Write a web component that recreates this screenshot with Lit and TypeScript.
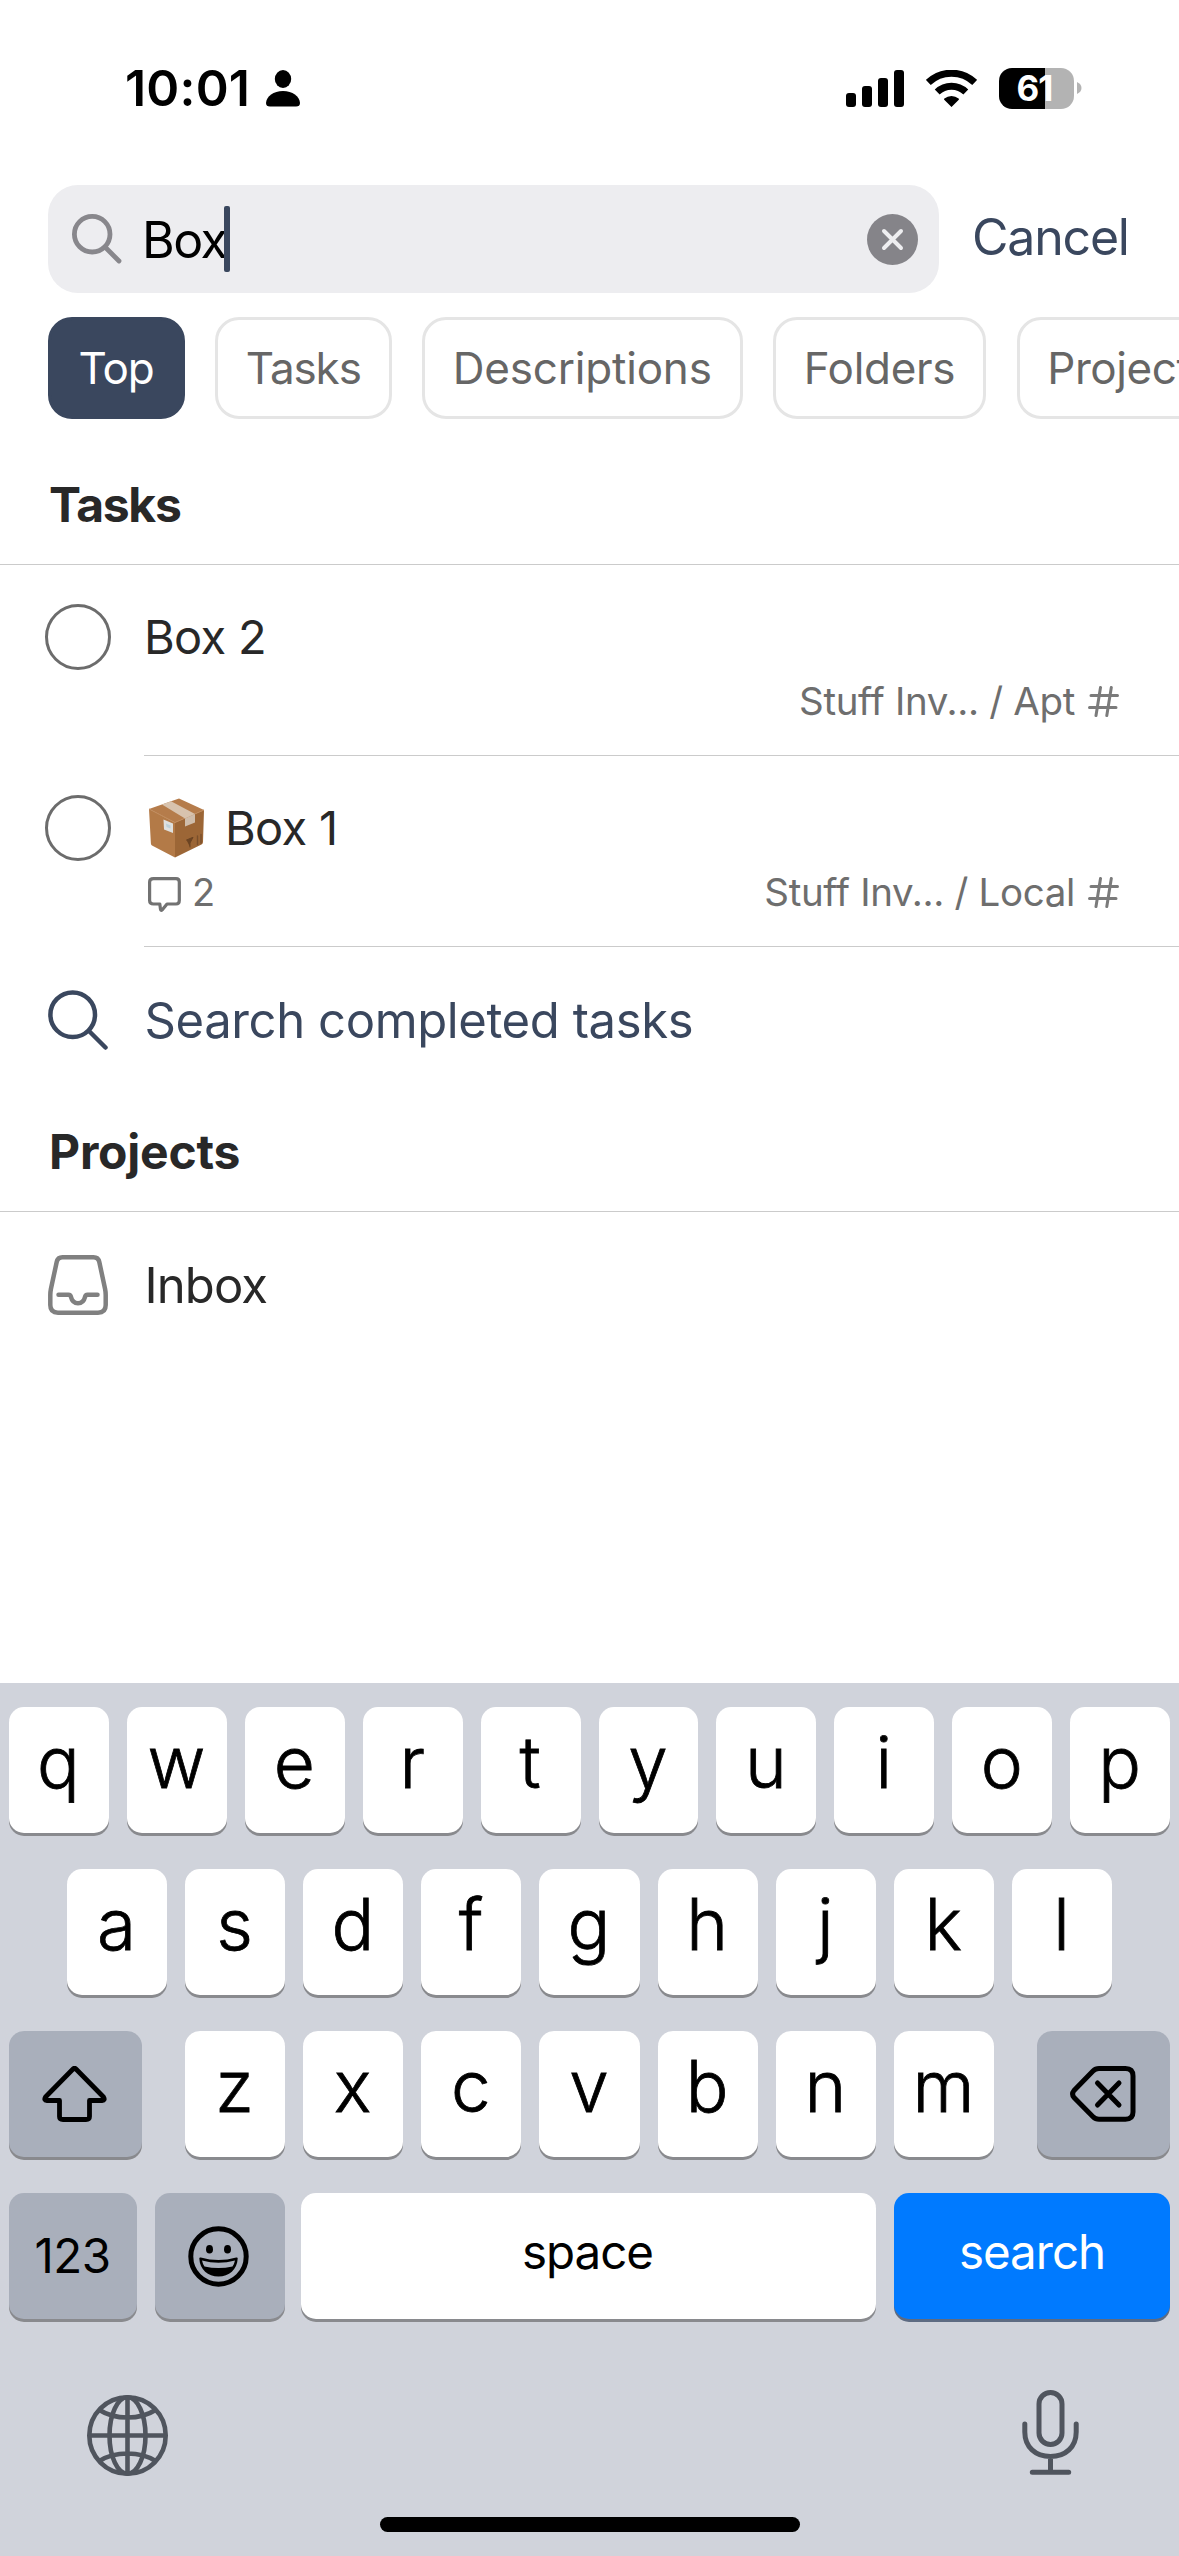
import { LitElement, html, css, svg, nothing } from "lit";
import { customElement, property } from "lit/decorators.js";

interface Task {
  title: string;
  boxed?: boolean;
  comments?: number;
  place: string;
}

interface Filter {
  name: string;
  tracking: number;
}

const filters: Filter[] = [
  { name: "Top", tracking: -1 },
  { name: "Tasks", tracking: -1.1 },
  { name: "Descriptions", tracking: -0.2 },
  { name: "Folders", tracking: -0.3 },
  { name: "Projects", tracking: -0.4 },
];

const tasks: Task[] = [
  { title: "Box 2", place: "Stuff Inv... / Apt" },
  { title: "Box 1", boxed: true, comments: 2, place: "Stuff Inv... / Local" },
];

const icon = (w: number, h: number, body: unknown) =>
  html`<svg width=${w} height=${h} viewBox="0 0 ${w} ${h}" fill="none" stroke-linecap="round" stroke-linejoin="round">${body}</svg>`;

const person = icon(34, 37, svg`
  <ellipse cx="17" cy="9" rx="8.2" ry="9" fill="#000"/>
  <path d="M4 36.500Q0 36.500 0 33C.5 26 7.500 21 17 21S33.500 26 34 33Q34 36.500 30 36.500Z" fill="#000"/>`);

const signal = icon(58, 37, svg`
  <g fill="#000">
    <rect x="0" y="23" width="10" height="14" rx="3"/>
    <rect x="16" y="16" width="10" height="21" rx="3"/>
    <rect x="32" y="8" width="10" height="29" rx="3"/>
    <rect x="48" y="0" width="10" height="37" rx="3"/>
  </g>`);

const wifi = icon(51, 37, svg`
  <g stroke="#000" stroke-width="7" stroke-linecap="butt">
    <path d="M2.300 12.500A33.500 33.500 0 0 1 48.700 12.500"/>
    <path d="M11.200 22A20.500 20.500 0 0 1 39.800 22"/>
  </g>
  <path d="M25.500 37L18.200 29.700Q17.700 29 18.400 28.500A11 11 0 0 1 32.600 28.500Q33.300 29 32.800 29.700Z" fill="#000"/>`);

const batteryCap = icon(5, 12, svg`<path d="M0 0C6 2.500 6 9.500 0 12Z" fill="#b3b3b3"/>`);

const fieldGlass = icon(50, 50, svg`
  <g stroke="#88878c" stroke-width="4.800"><circle cx="20.200" cy="20.200" r="17.800"/><path d="M33.500 33.500L47 47"/></g>`);

const listGlass = icon(60, 60, svg`
  <g stroke="#3a475e" stroke-width="4.500"><circle cx="24.700" cy="24.700" r="22.300"/><path d="M41.500 41.500L57.500 57.500"/></g>`);

const clear = icon(51, 51, svg`
  <circle cx="25.500" cy="25.500" r="25.500" fill="#858489"/>
  <path d="M17 17L34 34M34 17L17 34" stroke="#eeeef0" stroke-width="4"/>`);

const parcel = icon(55, 60, svg`
  <path d="M30 .5L0 11L26 24.500L55 12Z" fill="#b57c4b"/>
  <path d="M0 11L26 24.500V59.500L3 47.500Q2 47 1.900 45.500Z" fill="#b37a47"/>
  <path d="M55 12L26 24.500V59.500L52.500 46.500Q54 45.700 54 44Z" fill="#9c6636"/>
  <path d="M0 11L26 24.500L55 12" stroke="#c08b5c" stroke-width="1"/>
  <path d="M13 6.500L22 3.200L46 16L36 20.500Z" fill="#d8c3ae"/>
  <path d="M36 20.500L46 16V24.500L36 28.500Z" fill="#cfbdab"/>
  <path d="M14.500 21.500L24 25.500V35L15 31.500Z" fill="#dfe0de"/>
  <path d="M17 25.500L21.500 27.500V30.500L17.500 29Z" fill="#bdd0d8"/>
  <path d="M37.500 42L44 39.300L41 45V49" stroke="#6b4423" stroke-width="1" fill="#6b4423"/>
  <path d="M48.500 38V46.500M52 36.500V45" stroke="#7a4f2b" stroke-width="1.400"/>`);

const bubble = icon(33, 35, svg`
  <path d="M5.500 1.600H28Q31.300 1.600 31.300 5V23.500Q31.300 27 28 27H19L14.300 32.800Q12.800 34 12.500 32.200L11.800 27H5.500Q1.600 27 1.600 23.500V5Q1.600 1.600 5.500 1.600Z" stroke="#727272" stroke-width="3.200"/>`);

const hash = icon(31, 31, svg`
  <path d="M12.500 1.500L8 29.500M23.300 1.500L18.800 29.500M3 9.500H29.500M1.500 21.500H28" stroke="#7b7b7b" stroke-width="3"/>`);

const inbox = icon(60, 60, svg`
  <g stroke="#808080" stroke-width="4.500">
    <path d="M14.500 2.300H45.500Q50.300 2.300 51.300 7L57.100 34Q57.700 37 57.700 40V50Q57.700 57.700 50 57.700H10Q2.300 57.700 2.300 50V40Q2.300 37 2.900 34L8.700 7Q9.700 2.300 14.500 2.300Z"/>
    <path d="M10.500 39.800H20.500Q22.500 39.800 23 42C24 46.300 26.500 48.200 30 48.200S36 46.300 37 42Q37.500 39.800 39.500 39.800H49.500"/>
  </g>`);

const shift = icon(65, 56, svg`
  <path d="M30.800 3.200Q32.500 1.500 34.200 3.200L61.500 31Q63.500 34.200 60 34.500H47.500V50.500Q47.500 53.500 44 53.500H21Q17.500 53.500 17.500 50.500V34.500H5Q1.500 34.200 3.500 31Z" stroke="#000" stroke-width="4.800"/>`);

const backspace = icon(66, 56, svg`
  <g stroke="#000" stroke-width="5">
    <path d="M29 2.500H55.500Q63 2.500 63 10V46Q63 53.200 55.500 53.200H29Q25.500 53.200 23 50.700L4 31.500Q1.200 28 4 24.500L23 5Q25.500 2.500 29 2.500Z"/>
    <path d="M27.500 17L49 39M49 17L27.500 39"/>
  </g>`);

const smiley = icon(61, 61, svg`
  <circle cx="30.500" cy="30.500" r="27.700" stroke="#000" stroke-width="5"/>
  <g fill="#000">
    <ellipse cx="21.500" cy="23.200" rx="3.500" ry="4.300"/>
    <ellipse cx="39.500" cy="23.200" rx="3.500" ry="4.300"/>
    <path d="M11.300 32.500Q11.300 31.200 12.800 31.600Q30.500 36.600 48.200 31.600Q49.700 31.200 49.700 32.500C49.200 43.500 41 50.500 30.500 50.500S11.800 43.500 11.300 32.500Z"/>
  </g>
  <path d="M14 34.500Q30.500 39 47 34.500Q46.300 38 44.500 40.500Q30.500 43.500 16.500 40.500Q14.700 38 14 34.500Z" fill="#a9afbb"/>`);

const globe = icon(81, 81, svg`
  <g stroke="#50555e" stroke-width="4.600" stroke-linecap="butt">
    <circle cx="40.500" cy="40.500" r="38.200"/>
    <ellipse cx="40.500" cy="40.500" rx="18" ry="38.200"/>
    <path d="M40.500 2V79M2 40.500H79M12.500 15Q24 22.500 40.500 22.500T68.500 15M12.500 66Q24 58.500 40.500 58.500T68.500 66"/>
  </g>`);

const mic = icon(57, 86, svg`
  <g stroke="#50555e" stroke-width="5">
    <rect x="17" y="2.500" width="23" height="52" rx="11.500"/>
    <path d="M2.800 34V42C2.800 57 13.500 66.500 28.500 66.500S54.200 57 54.200 42V34M28.500 67V82M10.300 82.300H46.700"/>
  </g>`);

@customElement("status-bar")
class StatusBar extends LitElement {
  @property({ type: Number }) level = 61;
  static styles = css`
    :host { display: flex; align-items: center; height: 176px; padding: 0 97px 0 125px; }
    svg { display: block; }
    .time { font-size: 50px; font-weight: 600; letter-spacing: 0.2px; line-height: 60px; }
    .person { margin-left: 16px; flex: 1; }
    .signals { display: flex; align-items: center; gap: 22px; }
    .battery { display: flex; align-items: center; gap: 3px; }
    .cell { box-sizing: border-box; width: 75px; height: 41px; padding-right: 4px; border-radius: 13px; color: #fff;
      font-size: 35px; line-height: 41px; font-weight: 700; text-align: center; letter-spacing: -1px; }
  `;
  render() {
    const split = `linear-gradient(90deg,#000 ${this.level}%,#b3b3b3 ${this.level}%)`;
    return html`
      <span class="time">10:01</span>
      <span class="person">${person}</span>
      <div class="signals">
        ${signal}${wifi}
        <div class="battery"><div class="cell" style="background:${split}">${this.level}</div>${batteryCap}</div>
      </div>`;
  }
}

@customElement("section-title")
class SectionTitle extends LitElement {
  static styles = css`
    :host { display: flex; align-items: center; box-sizing: border-box; height: 146px; padding: 25px 49px 0;
      border-bottom: 1px solid #cbcbcb; font-size: 48px; font-weight: 700; color: #282828; }
  `;
  render() {
    return html`<slot></slot>`;
  }
}

@customElement("task-row")
class TaskRow extends LitElement {
  @property({ attribute: false }) task!: Task;
  static styles = css`
    :host { display: flex; height: 191px; }
    svg { display: block; }
    .check { box-sizing: border-box; width: 66px; height: 66px; margin: 39px 33px 0 45px; border: 3px solid #6c6c6c;
      border-radius: 50%; flex: none; }
    .body { flex: 1; box-sizing: border-box; border-bottom: 1px solid #cbcbcb; padding: 39px 60px 0 0; }
    .title { display: flex; align-items: center; height: 66px; font-size: 47px; letter-spacing: -0.7px; color: #282828; }
    .name { padding-bottom: 2px; }
    .parcel { margin: 0 21px 0 5px; }
    .meta { display: flex; align-items: center; height: 62px; font-size: 38.500px; color: #6e6e6e; padding-left: 4px; }
    .bubble { padding-top: 4px; }
    .count { margin-left: 11px; font-size: 38px; }
    .place { margin-left: auto; margin-right: 13px; letter-spacing: -0.33px; }
  `;
  render() {
    const t = this.task;
    return html`
      <span class="check"></span>
      <div class="body">
        <div class="title">${t.boxed ? html`<span class="parcel">${parcel}</span>` : nothing}<span class="name">${t.title}</span></div>
        <div class="meta">
          ${t.comments ? html`<span class="bubble">${bubble}</span><span class="count">${t.comments}</span>` : nothing}
          <span class="place">${t.place}</span>${hash}
        </div>
      </div>`;
  }
}

@customElement("key-board")
class KeyBoard extends LitElement {
  static styles = css`
    :host { display: flex; flex-direction: column; box-sizing: border-box; height: 873px; padding: 24px 9px 0;
      background: #d0d3db; color: #000; }
    svg { display: block; }
    .rows { display: flex; flex-direction: column; gap: 36px; }
    .row { display: flex; justify-content: center; gap: 18px; }
    .inset { padding: 0 58px; }
    .key { display: flex; align-items: center; justify-content: center; box-sizing: border-box; height: 126px;
      border-radius: 15px; background: #fff; box-shadow: 0 3px 0 #898a8e; font-size: 47.500px; }
    .letter { flex: 1 1 0; min-width: 0; font-size: 71px; font-weight: 300; -webkit-text-stroke: 0.8px #000; padding: 0 1px 17px 0; }
    .grey { background: #a9afbb; }
    .wide { width: 133px; flex: none; }
    .left { margin-right: 25px; padding-right: 2px; }
    .right { margin-left: 25px; }
    .num { width: 128px; letter-spacing: -0.5px; padding: 0 1px 1px 0; }
    .emoji { width: 130px; margin-right: -2px; padding-right: 3px; }
    .space { flex: 1; padding: 0 2px 9px 0; letter-spacing: -1px; }
    .go { width: 276px; background: #007aff; color: #fff; padding-bottom: 9px; letter-spacing: -1px; box-shadow: 0 3px 0 #5d6b82; }
    .tools { display: flex; justify-content: space-between; align-items: flex-start; padding: 71px 91px 0 78px; height: 127px; }
    .globe { margin-top: 5px; }
    .home { align-self: center; width: 420px; height: 15px; border-radius: 8px; background: #000; }
  `;
  private letters(s: string) {
    return [...s].map((c) => html`<span class="key letter">${c}</span>`);
  }
  render() {
    return html`
      <div class="rows">
        <div class="row">${this.letters("qwertyuiop")}</div>
        <div class="row inset">${this.letters("asdfghjkl")}</div>
        <div class="row">
          <span class="key grey wide left">${shift}</span>${this.letters("zxcvbnm")}<span class="key grey wide right">${backspace}</span>
        </div>
        <div class="row">
          <span class="key grey num">123</span><span class="key grey emoji">${smiley}</span>
          <span class="key space">space</span><span class="key go">search</span>
        </div>
      </div>
      <div class="tools"><span class="globe">${globe}</span><span>${mic}</span></div>
      <div class="home"></div>`;
  }
}

@customElement("app-root")
class AppRoot extends LitElement {
  static styles = css`
    :host { display: flex; flex-direction: column; width: 1179px; height: 2556px; overflow: hidden; background: #fff;
      font-family: Inter, "Liberation Sans", sans-serif; color: #000; }
    svg { display: block; }
    .top { display: flex; align-items: center; margin-top: 9px; padding-left: 48px; height: 108px; flex: none; }
    .field { display: flex; align-items: center; box-sizing: border-box; width: 891px; height: 108px; padding: 0 21px 0 24px;
      border-radius: 30px; background: #ededf0; }
    .query { margin-left: 20px; padding-top: 2px; font-size: 50px; line-height: 60px; letter-spacing: -1.500px; }
    .caret { width: 5.500px; height: 66px; border-radius: 2px; background: #3a475e; margin-left: -2px; flex: none; }
    .clear { margin-left: auto; }
    .cancel { margin-left: 33px; padding-bottom: 4px; font-size: 50px; color: #3a475e; letter-spacing: -1.200px; }
    .filters { display: flex; gap: 30.500px; margin-top: 24px; padding-left: 48px; height: 102px; flex: none; }
    .chip { display: flex; align-items: center; box-sizing: border-box; border: 3px solid #e5e5e5; border-radius: 24px;
      padding: 0 28px 0 27.500px; font-size: 44px; color: #666; flex: none; }
    .chip.on { background: #3a475e; border-color: #3a475e; color: #fff; }
    section-title, task-row, status-bar, key-board { flex: none; }
    .tight { letter-spacing: -1.300px; }
    .loose { letter-spacing: -0.2px; }
    .line { display: flex; align-items: center; padding: 43px 48px 16px; height: 60px; gap: 36.500px; font-size: 49px;
      color: #282828; letter-spacing: -0.9px; }
    .more { color: #3a475e; letter-spacing: -0.4px; }
    key-board { margin-top: auto; }
  `;
  render() {
    return html`
      <status-bar></status-bar>
      <div class="top">
        <div class="field">
          ${fieldGlass}<span class="query">Box</span><span class="caret"></span><span class="clear">${clear}</span>
        </div>
        <span class="cancel">Cancel</span>
      </div>
      <div class="filters">
        ${filters.map((f, i) => html`<span class="chip ${i === 0 ? "on" : ""}" style="letter-spacing:${f.tracking}px">${f.name}</span>`)}
      </div>
      <section-title class="tight">Tasks</section-title>
      ${tasks.map((t) => html`<task-row .task=${t}></task-row>`)}
      <div class="line more">${listGlass}<span>Search completed tasks</span></div>
      <section-title class="loose">Projects</section-title>
      <div class="line">${inbox}<span>Inbox</span></div>
      <key-board></key-board>`;
  }
}
